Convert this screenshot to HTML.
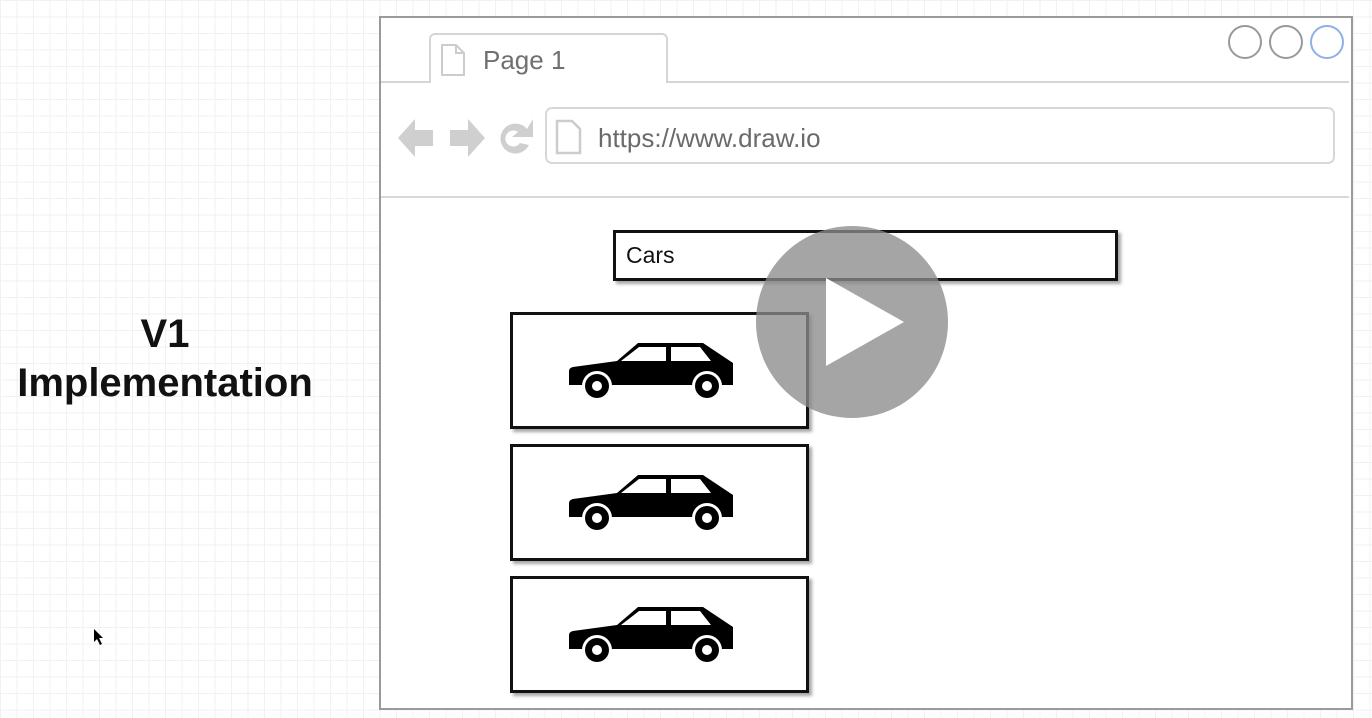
<!DOCTYPE html>
<html><head><style>
body{margin:0;width:1372px;height:718px;overflow:hidden;background:#fff;
background-image:linear-gradient(#f1f1f1 1px,transparent 1px),linear-gradient(90deg,#f1f1f1 1px,transparent 1px);background-size:16.5px 16.5px;font-family:"Liberation Sans",sans-serif;position:relative}
.abs{position:absolute}
.title{left:0;width:330px;text-align:center;top:310px;font-weight:bold;font-size:40px;line-height:49px;color:#111}
.frame{left:379px;top:16px;width:970px;height:690px;border:2px solid #9a9a9a;background:#fff}
.box{border:3px solid #111;background:#fff;box-shadow:3px 3px 3px rgba(0,0,0,.35);box-sizing:border-box}
</style></head><body>
<div class="abs title">V1<br>Implementation</div>
<div class="abs frame"></div>
<div class="abs" style="left:381px;top:81px;width:968px;height:2px;background:#d5d5d5"></div>
<div class="abs" style="left:429px;top:33px;height:50px;border:2px solid #d5d5d5;border-bottom:none;border-radius:6px 6px 0 0;background:#fff;box-sizing:border-box;width:239px"></div>
<svg class="abs" style="left:440px;top:43px" width="26" height="34"><path d="M2 2 H16 L24 10 V32 H2 Z M16 2 V10 H24" fill="none" stroke="#ccc" stroke-width="2"/></svg>
<div class="abs" style="left:483px;top:45px;font-size:26px;color:#707070">Page 1</div>
<div class="abs" style="left:381px;top:196px;width:968px;height:2px;background:#d8d8d8"></div>
<div class="abs" style="left:545px;top:107px;width:790px;height:57px;border:2px solid #d8d8d8;border-radius:7px;box-sizing:border-box"></div>
<svg class="abs" style="left:555px;top:119px" width="28" height="36"><path d="M2 2 H17 L25 10 V34 H2 Z" fill="none" stroke="#ccc" stroke-width="2.5"/></svg>
<div class="abs" style="left:598px;top:123px;font-size:26px;color:#6a6a6a">https://www.draw.io</div>
<svg class="abs" style="left:395px;top:115px" width="145" height="45">
<path d="M3 23 L20 4 V15 H38 V31 H20 V42 Z" fill="#cfcfcf"/>
<path d="M90 23 L73 4 V15 H55 V31 H73 V42 Z" fill="#cfcfcf"/>
<path d="M132 14 A15 15 0 1 0 134 30 L125 28 A8 8 0 1 1 123 17 L117 22 H138 V4 Z" fill="#cfcfcf"/>
</svg>
<svg class="abs" style="left:1225px;top:24px" width="125" height="38">
<circle cx="20" cy="18" r="16" fill="none" stroke="#999" stroke-width="2"/>
<circle cx="61" cy="18" r="16" fill="none" stroke="#999" stroke-width="2"/>
<circle cx="102" cy="18" r="16" fill="none" stroke="#8fb0e6" stroke-width="2"/>
</svg>
<div class="abs box" style="left:613px;top:230px;width:505px;height:51px"></div>
<div class="abs" style="left:626px;top:242px;font-size:23px;color:#111">Cars</div>
<div class="abs box" style="left:510px;top:312px;width:299px;height:117px"></div>
<div class="abs box" style="left:510px;top:444px;width:299px;height:117px"></div>
<div class="abs box" style="left:510px;top:576px;width:299px;height:117px"></div>
<svg width="0" height="0" style="position:absolute"><defs>
<g id="car">
<path d="M0 30 Q0 27 4 26 L48 20 L69 2 H134 L164 22 V44 H0 Z" fill="#000"/>
<path d="M52 20 L70 6 H97 V20 Z M102 6 H131 L142 20 H102 Z" fill="#fff"/>
<circle cx="28" cy="45" r="15" fill="#fff"/><circle cx="28" cy="45" r="12" fill="#000"/><circle cx="28" cy="45" r="5" fill="#fff"/>
<circle cx="138" cy="45" r="15" fill="#fff"/><circle cx="138" cy="45" r="12" fill="#000"/><circle cx="138" cy="45" r="5" fill="#fff"/>
</g></defs></svg>
<svg class="abs" style="left:569px;top:341px" width="170" height="62"><use href="#car"/></svg>
<svg class="abs" style="left:569px;top:473px" width="170" height="62"><use href="#car"/></svg>
<svg class="abs" style="left:569px;top:605px" width="170" height="62"><use href="#car"/></svg>
<svg class="abs" style="left:756px;top:226px" width="192" height="192">
<circle cx="96" cy="96" r="96" fill="rgba(140,140,140,.78)"/>
<path d="M70 52 L148 96 L70 140 Z" fill="#fff"/>
</svg>
<svg class="abs" style="left:93px;top:628px" width="12" height="18"><path d="M1 1 V14 L4 11 L7 17 L9 16 L6 10 H10 Z" fill="#000"/></svg>
</body></html>
